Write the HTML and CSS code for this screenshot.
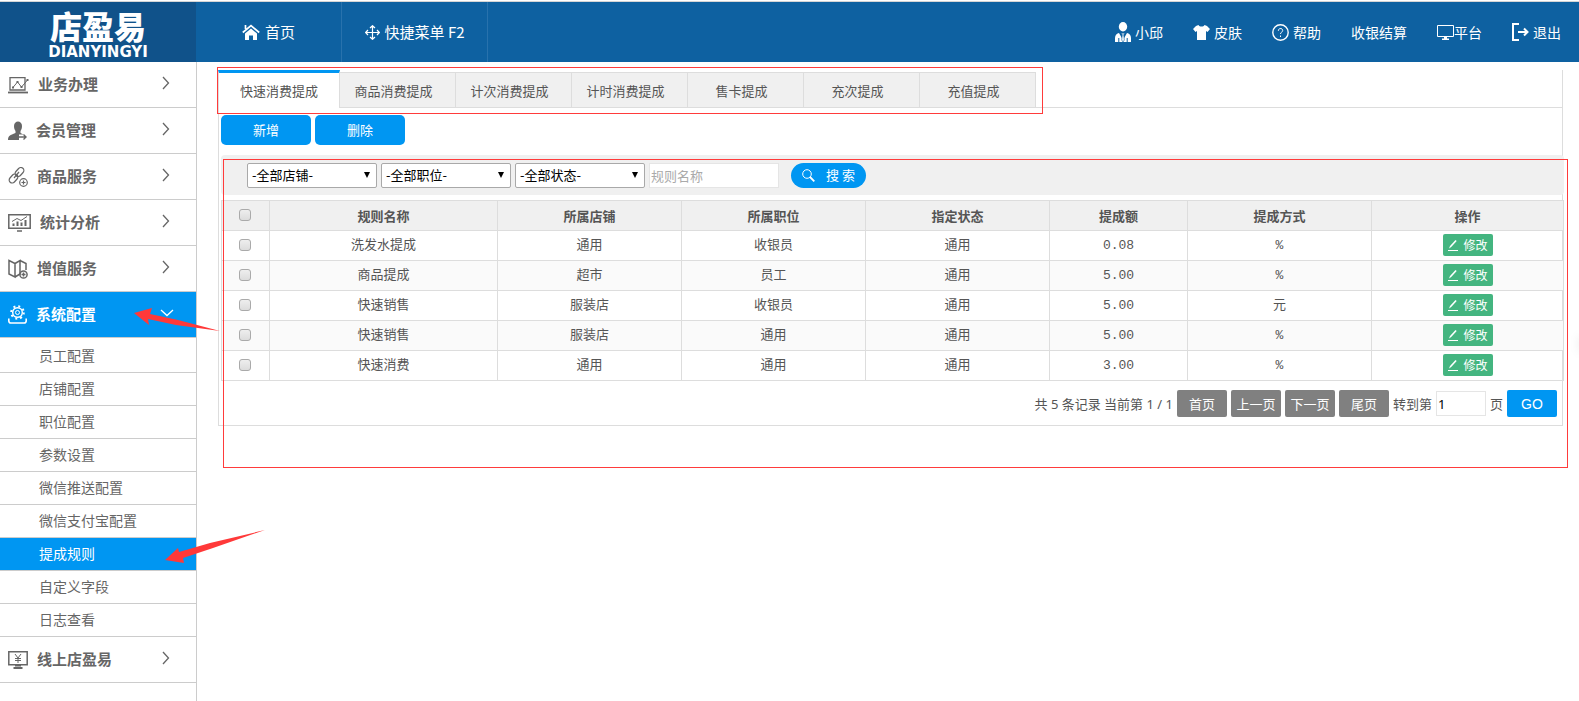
FILE: index.html
```html
<!DOCTYPE html>
<html lang="zh-CN">
<head>
<meta charset="utf-8">
<title>店盈易 - 提成规则</title>
<link rel="stylesheet" href="styles.css">
</head>
<body>
<svg class="defs" aria-hidden="true">
  <symbol id="edit" viewBox="0 0 12 12"><path d="M1 11.500h10" stroke="#fff"/><path d="M2 9.500l1-2.500L8.500 1l1.200 1L4.200 8z" fill="#fff"/></symbol>
  <symbol id="chevron" viewBox="0 0 8 14"><path d="M1 1l5.500 6L1 13" fill="none" stroke="currentColor" stroke-width="1.300"/></symbol>
</svg>
<header class="header">
  <a class="logo" href="#"><span class="logo-name">店盈易</span><span class="logo-latin">DIANYINGYI</span></a>
  <nav class="main-nav">
    <a href="#"><svg width="18" height="17" viewBox="0 0 18 17"><path d="M.8 8.500L9 1.500l8.200 7M3.500 5V1" fill="none" stroke="#fff" stroke-width="1.700"/><path d="M3 9.500L9 4.500l6 5V16h-4v-4.500H7V16H3z" fill="#fff"/></svg>首页</a>
    <a href="#"><svg width="15" height="15" viewBox="0 0 15 15"><path d="M7.500 1v13M1 7.500h13M5 3l2.500-2.300L10 3M5 12l2.500 2.300L10 12M3 5L.700 7.500 3 10M12 5l2.300 2.500L12 10" fill="none" stroke="#fff" stroke-width="1.200"/></svg>快捷菜单 F2</a>
  </nav>
  <nav class="user-nav">
    <a href="#"><svg width="16" height="20" viewBox="0 0 16 20"><ellipse cx="8" cy="4.700" rx="4.200" ry="4.700" fill="#fff"/><path d="M0 20v-4c0-3 2-4.500 4-5l4 7 4-7c2 .500 4 2 4 5v4z" fill="#fff"/><path d="M6 11.500l1.300 1L6.700 18 8 20l1.300-2-.6-5.500 1.300-1" fill="#fff" stroke="#0e61a1" stroke-width=".6"/><path d="M3.800 16v4M12.200 16v4" stroke="#0e61a1"/></svg>小邱</a>
    <a href="#"><svg width="17" height="15" viewBox="0 0 17 15"><path d="M5.500 0c1 2 5 2 6 0l2.500 1L17 4l-2.500 3-1.500-1v9H4V6L2.500 7 0 4l3-3z" fill="#fff"/></svg>皮肤</a>
    <a href="#"><svg width="17" height="17" viewBox="0 0 17 17" fill="none" stroke="#fff"><circle cx="8.500" cy="8.500" r="7.700" stroke-width="1.400"/><path d="M6.300 6.800c0-3 4.400-3 4.400-.3 0 1.800-2.200 1.500-2.200 3.500M8.500 11.500V13"/></svg>帮助</a>
    <a href="#">收银结算</a>
    <a class="platform" href="#"><svg width="17" height="15" viewBox="0 0 17 15"><path d="M.500.500h16v11H.500z" fill="none" stroke="#fff"/><path d="M7 12h3v1.500h2V15H5v-1.500h2z" fill="#fff"/></svg>平台</a>
    <a href="#"><svg width="17" height="18" viewBox="0 0 17 18" fill="none" stroke="#fff" stroke-width="2"><path d="M7 1H1v16h6M6 9h9M12 5.500L15.500 9 12 12.500"/></svg>退出</a>
  </nav>
</header>
<div class="layout">
  <aside class="sidebar">
    <a class="group" href="#"><svg width="21" height="18" viewBox="0 0 21 18" fill="none" stroke="#666"><path d="M2 14V1.700h15V14z" stroke-width="1.300"/><path d="M4.500 12l5-6 4 5 6-7" stroke-width="1"/><path d="M0 16.500h20" stroke-width="1.800"/><path d="M8.500 6h2M12.500 11h2M4 11.500h2M18.500 4h2" stroke-width="2"/></svg><span>业务办理</span><svg class="arrow"><use href="#chevron"/></svg></a>
    <a class="group" href="#"><svg width="19" height="20" viewBox="0 0 19 20"><path d="M6 5c0-6 8-6 8 0 0 3-1 4-1.500 5v2l3 1.500H11V19H0c0-4 2-5 7.500-7v-2C7 9 6 8 6 5z" fill="#666"/><path d="M11 16h7M15.500 13.500L18 16l-2.500 2.500" fill="none" stroke="#666" stroke-width="1.400"/></svg><span>会员管理</span><svg class="arrow"><use href="#chevron"/></svg></a>
    <a class="group" href="#"><svg width="20" height="20" viewBox="0 0 20 20" fill="none" stroke="#666" stroke-width="1.200"><rect x="-5" y="-3" width="10" height="6" rx="3" transform="translate(11.500 5) rotate(-48)"/><rect x="-5" y="-3" width="10" height="6" rx="3" transform="translate(5.500 11.500) rotate(-48)"/><path d="M6 11l5-6"/><circle cx="15.500" cy="15.500" r="3.800"/><path d="M15.500 13.500v4M13.500 15.500h4"/></svg><span>商品服务</span><svg class="arrow"><use href="#chevron"/></svg></a>
    <a class="group" href="#"><svg width="23" height="18" viewBox="0 0 23 18" fill="none" stroke="#666"><path d="M.800.800h21.400v13.400H.800z" stroke-width="1.500"/><path d="M5.500 12V9.500M9.500 12V7.500M13.500 12V8.500M17.500 12V6" stroke-width="2"/><path d="M4 7.500l5-3 4 2 6-4" stroke-width="1"/><path d="M9 17h5" stroke-width="1.500"/></svg><span>统计分析</span><svg class="arrow"><use href="#chevron"/></svg></a>
    <a class="group" href="#"><svg width="20" height="20" viewBox="0 0 20 20" fill="none" stroke="#666" stroke-width="1.500"><path d="M1 1.500l6 3V18l-6-3zM7 4.500l5-3V15l-5 3M12 1.500l6 3V11"/><circle cx="15.500" cy="15.500" r="3.600"/><path d="M15.500 13.500v4M13.500 15.500h4"/></svg><span>增值服务</span><svg class="arrow"><use href="#chevron"/></svg></a>
    <div class="group-open">
      <a class="group active" href="#"><svg width="19" height="19" viewBox="0 0 19 19" fill="none" stroke="#fff"><circle cx="9.500" cy="7.500" r="4.800" stroke-width="1.400"/><circle cx="9.500" cy="7.500" r="2"/><circle cx="9.500" cy="7.500" r="6.300" stroke-width="2" stroke-dasharray="2 2.950"/><path d="M.800 13.500v2.200c0 1.500.7 2.300 2.200 2.300h13c1.500 0 2.200-.8 2.200-2.300v-2.200" stroke-width="1.600"/></svg><span>系统配置</span><svg class="arrow down" viewBox="0 0 14 8"><path d="M1 1l6 5.500L13 1" fill="none" stroke="currentColor" stroke-width="1.300"/></svg></a>
      <svg class="pointer pointer-group" width="86" height="24" viewBox="0 0 86 24"><path d="M0 5L18 0l-2 6 28 6 42 11-44-6-28-6 1 6z" fill="#ff3939"/></svg>
    </div>
    <ul class="submenu">
      <li><a href="#">员工配置</a></li>
      <li><a href="#">店铺配置</a></li>
      <li><a href="#">职位配置</a></li>
      <li><a href="#">参数设置</a></li>
      <li><a href="#">微信推送配置</a></li>
      <li><a href="#">微信支付宝配置</a></li>
      <li class="current"><a href="#">提成规则</a><svg class="pointer pointer-item" width="100" height="34" viewBox="0 0 100 34"><path d="M0 30L13 18l1 4 31-9L100 0 48 18 18 28l1 5z" fill="#ff3939"/></svg></li>
      <li><a href="#">自定义字段</a></li>
      <li><a href="#">日志查看</a></li>
    </ul>
    <a class="group" href="#"><svg width="20" height="18" viewBox="0 0 20 18" fill="none" stroke="#666"><path d="M.800.800h18.400v13H.800z" stroke-width="1.500"/><path d="M7 3l3 4 3-4M10 7v5M7 7.500h6M7 9.500h6"/><path d="M7 14.500h6M5.500 17h9" stroke-width="2"/></svg><span>线上店盈易</span><svg class="arrow"><use href="#chevron"/></svg></a>
  </aside>
  <main class="content">
    <div class="tabs">
      <a class="tab selected" href="#">快速消费提成</a>
      <a class="tab" href="#">商品消费提成</a>
      <a class="tab" href="#">计次消费提成</a>
      <a class="tab" href="#">计时消费提成</a>
      <a class="tab" href="#">售卡提成</a>
      <a class="tab" href="#">充次提成</a>
      <a class="tab" href="#">充值提成</a>
      <div class="mark mark-tabs"></div>
    </div>
    <div class="panel">
      <div class="actions"><button class="primary" type="button">新增</button><button class="primary" type="button">删除</button></div>
      <div class="listing">
        <form class="filters">
          <select aria-label="店铺"><option>-全部店铺-</option></select>
          <select aria-label="职位"><option>-全部职位-</option></select>
          <select aria-label="状态"><option>-全部状态-</option></select>
          <input type="text" placeholder="规则名称" aria-label="规则名称">
          <button class="search" type="button"><svg width="13" height="13" viewBox="0 0 13 13" fill="none" stroke="#fff"><circle cx="5" cy="5" r="4.300"/><path d="M8 8l4.300 4.300" stroke-width="1.800"/></svg>搜 索</button>
        </form>
        <table class="rules">
          <colgroup><col class="c-check"><col class="c-name"><col class="c-mid"><col class="c-mid"><col class="c-mid"><col class="c-amount"><col class="c-mid"><col class="c-op"></colgroup>
          <thead><tr><th><input type="checkbox" aria-label="全选"></th><th>规则名称</th><th>所属店铺</th><th>所属职位</th><th>指定状态</th><th>提成额</th><th>提成方式</th><th>操作</th></tr></thead>
          <tbody>
            <tr><td><input type="checkbox" aria-label="选择洗发水提成"></td><td>洗发水提成</td><td>通用</td><td>收银员</td><td>通用</td><td>0.08</td><td>%</td><td><button class="edit" type="button"><svg><use href="#edit"/></svg>修改</button></td></tr>
            <tr><td><input type="checkbox" aria-label="选择商品提成"></td><td>商品提成</td><td>超市</td><td>员工</td><td>通用</td><td>5.00</td><td>%</td><td><button class="edit" type="button"><svg><use href="#edit"/></svg>修改</button></td></tr>
            <tr><td><input type="checkbox" aria-label="选择快速销售"></td><td>快速销售</td><td>服装店</td><td>收银员</td><td>通用</td><td>5.00</td><td>元</td><td><button class="edit" type="button"><svg><use href="#edit"/></svg>修改</button></td></tr>
            <tr><td><input type="checkbox" aria-label="选择快速销售"></td><td>快速销售</td><td>服装店</td><td>通用</td><td>通用</td><td>5.00</td><td>%</td><td><button class="edit" type="button"><svg><use href="#edit"/></svg>修改</button></td></tr>
            <tr><td><input type="checkbox" aria-label="选择快速消费"></td><td>快速消费</td><td>通用</td><td>通用</td><td>通用</td><td>3.00</td><td>%</td><td><button class="edit" type="button"><svg><use href="#edit"/></svg>修改</button></td></tr>
          </tbody>
        </table>
        <div class="pager">
          <span>共 5 条记录 当前第 1 / 1</span>
          <button type="button">首页</button><button type="button">上一页</button><button type="button">下一页</button><button type="button">尾页</button>
          <label for="page">转到第</label><input id="page" type="text" value="1"><span>页</span>
          <button class="go" type="button">GO</button>
        </div>
        <div class="mark mark-list"></div>
      </div>
    </div>
  </main>
</div>
<div class="edge-handle"></div>
</body>
</html>
```
FILE: styles.css
```css
* { box-sizing: border-box; }
body { margin: 0; color: #555; background: #fff; font: 13px/20px "Noto Sans CJK SC", sans-serif; }
a { color: inherit; text-decoration: none; }
svg { flex: none; }
button, input, select { font: inherit; margin: 0; }
button { border: 0; color: #fff; cursor: pointer; padding: 0; }
.defs { position: absolute; width: 0; height: 0; }

.header { display: flex; height: 61px; margin-top: 1px; border-top: 1px solid #d5d5d5; background: #0e61a1; color: #fff; font-size: 15px; }
.logo { width: 196px; background: #10528a; display: flex; flex-direction: column; align-items: center; padding-top: 5px; font-weight: 900; }
.logo-name { font-size: 32px; line-height: 36px; }
.logo-latin { margin-top: 2px; font: bold 15px/14px "DejaVu Sans", sans-serif; }
.main-nav { display: flex; }
.main-nav a { display: flex; align-items: center; justify-content: center; gap: 5px; width: 146px; border-right: 1px solid #2872ad; }
.user-nav { display: flex; align-items: center; gap: 30px; margin-left: auto; padding-right: 18px; font-size: 14px; }
.user-nav a { display: flex; align-items: center; gap: 4px; }
.user-nav .platform { gap: 0; }

.layout { display: flex; min-height: 639px; }
.sidebar { width: 197px; flex: none; border-right: 1px solid #ccc; color: #666; }
.group { display: flex; align-items: center; gap: 9px; height: 46px; padding: 0 26px 0 8px; border-bottom: 1px solid #ccc; font-size: 15px; font-weight: bold; }
.group span { padding-bottom: 2px; }
.arrow { width: 8px; height: 14px; margin: 0 0 4px auto; }
.arrow.down { width: 14px; height: 8px; margin-right: -4px; }
.group.active { background: #0096f2; color: #fff; }
.group-open, .current { position: relative; }
.pointer { position: absolute; z-index: 2; }
.pointer-group { left: 134px; top: 16px; }
.pointer-item { left: 165px; top: -8px; }
.submenu { margin: 0; padding: 2px 0 0; list-style: none; font-size: 14px; }
.submenu li { height: 33px; border-bottom: 1px solid #ccc; }
.submenu a { display: block; padding-left: 39px; line-height: 30px; }
.submenu .current { background: #0096f2; color: #fff; }

.content { flex: 1; min-width: 0; padding: 8px 16px 0 21px; }
.tabs { position: relative; display: flex; align-items: flex-end; height: 38px; border-right: 1px solid #ddd; border-bottom: 1px solid #ddd; }
.tab { width: 116px; height: 36px; border: 1px solid #ddd; border-left: 0; background: #f0f0f0; text-align: center; line-height: 35px; padding-right: 8px; margin-bottom: -1px; }
.tab.selected { width: 122px; height: 38px; padding: 0; border: 0; border-top: 3px solid #0096f2; border-right: 1px solid #ddd; border-left: 1px solid #ddd; background: #fff; }
.panel { border: 1px solid #ddd; border-top: 0; padding: 7px 0 8px 2px; }
.actions { display: flex; gap: 4px; }
.primary { width: 90px; height: 30px; border-radius: 5px; background: #0096f2; }
.listing { position: relative; margin: 10px -2px 0 0; }
.filters { display: flex; align-items: center; gap: 4px; height: 40px; padding-left: 26px; border-radius: 4px; background: #f0f0f0; }
.filters select { appearance: none; width: 130px; height: 25px; padding: 0 4px; border: 1px solid #a9a9a9; border-radius: 2px; color: #000; background: #fff url("data:image/svg+xml,%3Csvg xmlns='http://www.w3.org/2000/svg' width='8' height='7'%3E%3Cpath d='M1 0h6L4 6z'/%3E%3C/svg%3E") no-repeat right 5px top 8px; }
.filters input { width: 130px; height: 25px; padding: 0 1px; border: 1px solid #e5e5e5; background: #fff; }
.filters input::placeholder { color: #aaa; }
.search { display: flex; align-items: center; justify-content: center; gap: 11px; width: 75px; height: 25px; margin-left: 8px; border-radius: 13px; background: #0096f2; }
.rules { width: 100%; margin-top: 5px; border-collapse: collapse; table-layout: fixed; }
.rules th, .rules td { height: 30px; padding: 0; border: 1px solid #ddd; text-align: center; }
.rules td { font-family: "Liberation Mono", "Noto Sans CJK SC", monospace; font-size: 13px; }
.rules thead { background: #f0f0f0; }
.rules tbody tr:nth-child(even) { background: #fafafa; }
.rules th:first-child, .rules td:first-child { padding: 0 2px 2px 0; }
.rules td:last-child { padding-bottom: 2px; }
.c-check { width: 48px; }
.c-name { width: 17%; }
.c-mid { width: 184px; }
.c-amount { width: 138px; }
.c-op { width: 192px; }
.rules input { appearance: none; display: block; width: 12px; height: 12px; margin: 0 auto; border: 1px solid #aaa; border-radius: 3px; background: linear-gradient(#eee, #dcdcdc); }
.edit { display: flex; align-items: center; justify-content: center; gap: 4px; width: 50px; height: 22px; margin: 0 auto; border-radius: 2px; background: #44b580; font: 12px/20px "Noto Sans CJK SC", sans-serif; }
.edit svg { width: 12px; height: 12px; }
.pager { display: flex; align-items: center; justify-content: flex-end; gap: 4px; margin-top: 9px; padding-right: 7px; font-family: "Noto Sans", "Noto Sans CJK SC", sans-serif; }
.pager button { width: 50px; height: 27px; border-radius: 2px; background: #808080; }
.pager .go { background: #0096f2; font-family: "Liberation Sans", sans-serif; font-size: 14px; }
.pager input { width: 50px; height: 25px; padding: 0 1px; border: 1px solid #e5e5e5; color: #000; }
.mark { position: absolute; border: 1px solid #ff3b3b; pointer-events: none; }
.mark-tabs { left: -1px; top: -3px; width: 826px; height: 47px; }
.mark-list { left: 2px; right: -4px; top: 4px; bottom: -51px; }
.edge-handle { position: fixed; right: -2px; top: 336px; width: 1px; height: 16px; box-shadow: 0 0 8px #aaa; }
```
